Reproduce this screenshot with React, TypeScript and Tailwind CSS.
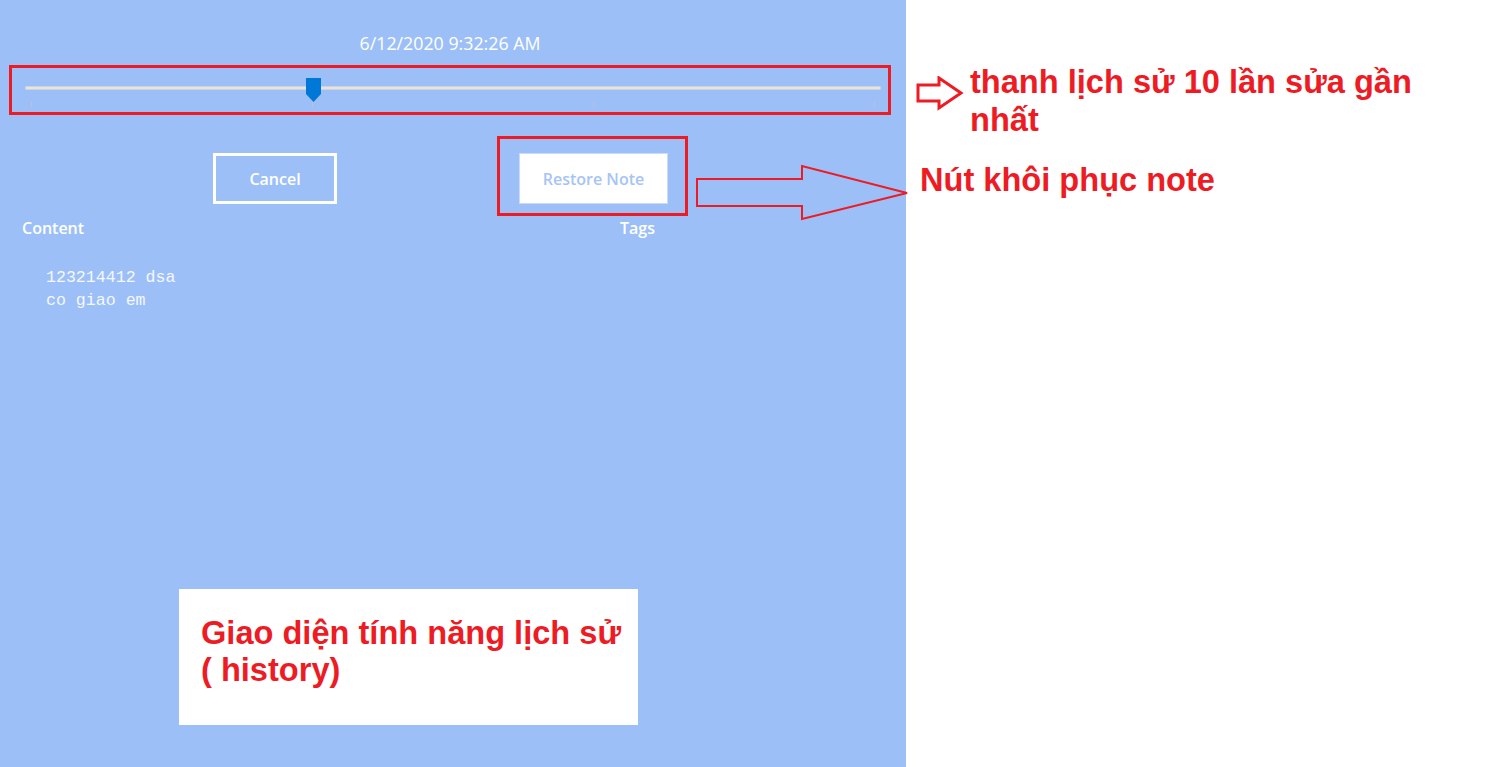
const ticks = [6, 287, 568, 849];

function HistorySlider() {
  return (
    <div className="relative mx-[25px] mt-[19px] h-[34px]">
      <div className="absolute left-0 right-0 top-[12px] h-[4px] rounded-[1px] border border-[#cfd3d8] bg-[#e4e4e4]" />
      {ticks.map((x) => (
        <div
          key={x}
          className="absolute top-[28px] h-[5px] w-px bg-[#b9c3d3]"
          style={{ left: x }}
        />
      ))}
      <svg
        className="absolute left-[281px] top-[4px]"
        width="15"
        height="24"
        viewBox="0 0 15 24"
        aria-hidden="true"
      >
        <path d="M0 0H15V16L7.5 24L0 16Z" fill="#0078d7" />
      </svg>
    </div>
  );
}

function ArrowOutline({
  className,
  width,
  height,
  points,
  stroke,
}: {
  className: string;
  width: number;
  height: number;
  points: string;
  stroke: number;
}) {
  return (
    <svg className={className} width={width} height={height} aria-hidden="true">
      <polygon
        points={points}
        fill="none"
        stroke="#ed1c24"
        strokeWidth={stroke}
        strokeLinejoin="miter"
      />
    </svg>
  );
}

export default function App() {
  return (
    <div className="relative flex h-[767px] w-[1486px] overflow-hidden bg-white font-['Liberation_Sans',Arial,sans-serif]">
      {/* history panel */}
      <div className="flex h-full w-[906px] flex-col bg-[#9dbff7] font-['Open_Sans','Noto_Sans',sans-serif] text-white">
        <div className="mt-[31px] h-[24px] pr-[6px] text-center text-[17.8px] leading-[24px]">
          6/12/2020 9:32:26 AM
        </div>

        <HistorySlider />

        <div className="mt-[45px] flex h-[51px]">
          <button
            type="button"
            className="ml-[213px] h-[51px] w-[124px] border-[3px] border-white text-[16px] font-semibold text-white"
          >
            Cancel
          </button>
          <button
            type="button"
            className="ml-[182px] h-[51px] w-[149px] border border-[#c9dbf9] bg-white text-[16px] font-semibold text-[#a6c4f5]"
          >
            Restore Note
          </button>
        </div>

        <div className="mt-[14px] flex h-[20px] text-[16px] font-semibold leading-[20px]">
          <div className="w-[620px] pl-[22px]">Content</div>
          <div>Tags</div>
        </div>

        <div className="mt-[28px] pl-[46px] font-['Liberation_Mono','DejaVu_Sans_Mono',monospace] text-[16.6px] leading-[23px] text-[#f4f8ff]">
          <div>123214412 dsa</div>
          <div>co giao em</div>
        </div>
      </div>

      {/* annotations drawn over the screenshot */}
      <div className="absolute left-[9px] top-[65px] h-[50px] w-[882px] border-[3px] border-[#ed1c24]" />
      <div className="absolute left-[497px] top-[136px] h-[80px] w-[191px] border-[3px] border-[#ed1c24]" />

      <ArrowOutline
        className="absolute left-[696px] top-[164px]"
        width={214}
        height={57}
        stroke={2}
        points="1,15 106,15 106,2 211,29 106,55 106,42 1,42"
      />
      <ArrowOutline
        className="absolute left-[916px] top-[76px]"
        width={48}
        height={35}
        stroke={3}
        points="2,9 23,9 23,2 45,17 23,32 23,25 2,25"
      />

      <div className="absolute left-[970px] top-[63px] text-[32.6px] font-bold leading-[38px] text-[#ed1c24]">
        thanh lịch sử 10 lần sửa gần
        <br />
        nhất
      </div>
      <div className="absolute left-[920px] top-[161px] text-[32.6px] font-bold leading-[38px] text-[#ed1c24]">
        Nút khôi phục note
      </div>

      <div className="absolute left-[179px] top-[589px] h-[136px] w-[459px] bg-white pl-[22px] pt-[25px] text-[32.6px] font-bold leading-[37px] text-[#ed1c24]">
        Giao diện tính năng lịch sử
        <br />( history)
      </div>
    </div>
  );
}
